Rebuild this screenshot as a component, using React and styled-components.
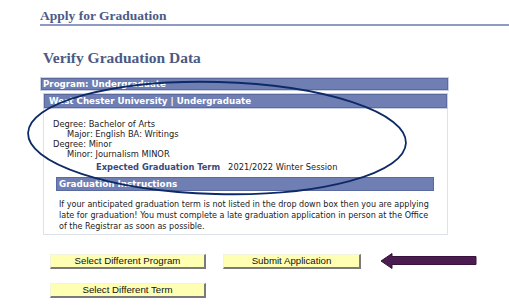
import styled, { createGlobalStyle } from "styled-components";

const GlobalStyle = createGlobalStyle`
  body {
    margin: 0;
    background: #ffffff;
    font-family: "DejaVu Sans", Verdana, sans-serif;
  }
`;

const App = () => {
  return (
    <>
      <GlobalStyle />
      <Page>
        {/* page title */}
        <Header>
          <PageTitle>Apply for Graduation</PageTitle>
        </Header>

        <Main>
          <Heading>Verify Graduation Data</Heading>
          <Bar>Program: Undergraduate</Bar>

          <ProgramBox>
            <Bar inset>West Chester University | Undergraduate</Bar>
            <Details>
              <Line>Degree: Bachelor of Arts</Line>
              <Line indent>Major: English BA: Writings</Line>
              <Line>Degree: Minor</Line>
              <Line indent>Minor: Journalism MINOR</Line>
              <TermRow>
                <TermLabel>Expected Graduation Term</TermLabel>
                <span>2021/2022 Winter Session</span>
              </TermRow>
            </Details>
            <SubBar>Graduation Instructions</SubBar>
            <Instructions>
              If your anticipated graduation term is not listed in the drop down box then you are applying<br />
              late for graduation! You must complete a late graduation application in person at the Office<br />
              of the Registrar as soon as possible.
            </Instructions>
          </ProgramBox>
        </Main>

        {/* buttons */}
        <ButtonRow>
          <Button width="156px">Select Different Program</Button>
          <Button width="138px" left>Submit Application</Button>
          <Arrow width="98" height="16" viewBox="0 0 98 16">
            <polygon points="1,8 12,0.5 12,3.5 96,3.5 96,11.5 12,11.5 12,15.5" fill="#4a1d4e" stroke="#3a1040" strokeWidth="1" />
          </Arrow>
        </ButtonRow>
        <ButtonRow second>
          <Button width="156px">Select Different Term</Button>
        </ButtonRow>

        {/* hand drawn ellipse */}
        <Circle width="509" height="307" viewBox="0 0 509 307">
          <ellipse cx="217" cy="138" rx="189" ry="56" transform="rotate(1.5 217 138)" fill="none" stroke="#0e2a66" strokeWidth="1.8" />
        </Circle>
      </Page>
    </>
  );
};

const Page = styled.div`
  position: relative;
  width: 509px;
  height: 307px;
  overflow: hidden;
`;

const Header = styled.div`
  margin-left: 40px;
  padding-top: 8px;
  border-bottom: 2px solid #8c9ac4;
`;

const PageTitle = styled.div`
  font-family: "Liberation Serif", "Times New Roman", serif;
  font-weight: bold;
  font-size: 13.5px;
  line-height: 15px;
  color: #4b5a88;
  padding-bottom: 1px;
`;

const Main = styled.div`
  margin-left: 41px;
  width: 407px;
  display: flex;
  flex-direction: column;
  padding-top: 23px;
`;

const Heading = styled.div`
  font-family: "Liberation Serif", "Times New Roman", serif;
  font-weight: bold;
  font-size: 15.5px;
  line-height: 17px;
  color: #4b5a84;
  margin-left: 2px;
  margin-bottom: 12px;
`;

const Bar = styled.div`
  box-sizing: border-box;
  height: ${(props) => (props.inset ? "14px" : "12px")};
  background: #6f7fb4;
  border: 1px solid #5a6a9f;
  outline: 1px solid #c9cfe4;
  color: #ffffff;
  font-weight: bold;
  font-size: 8.7px;
  line-height: ${(props) => (props.inset ? "12px" : "10px")};
  padding-left: ${(props) => (props.inset ? "4px" : "1px")};
  white-space: nowrap;
  overflow: hidden;
`;

const ProgramBox = styled.div`
  margin-top: 4px;
  margin-left: 2px;
  border: 1px solid #dde1ea;
  border-top: none;
  padding-bottom: 2px;
`;

const Details = styled.div`
  padding: 11px 0 0 9px;
  font-size: 8.3px;
  line-height: 10px;
  color: #222222;
`;

const Line = styled.div`
  padding-left: ${(props) => (props.indent ? "14px" : "0")};
`;

const TermRow = styled.div`
  margin-top: 3px;
  padding-left: 43px;
  display: flex;
  gap: 8px;
`;

const TermLabel = styled.span`
  font-weight: bold;
  color: #3c4a7c;
`;

const SubBar = styled.div`
  box-sizing: border-box;
  margin: 5px 0 0 12px;
  width: 378px;
  height: 14px;
  background: #6f7fb4;
  border: 1px solid #5a6a9f;
  color: #ffffff;
  font-weight: bold;
  font-size: 8.8px;
  line-height: 12px;
  padding-left: 2px;
`;

const Instructions = styled.div`
  margin: 8px 0 0 15px;
  font-size: 8.05px;
  line-height: 11px;
  color: #222222;
  white-space: nowrap;
`;

const ButtonRow = styled.div`
  display: flex;
  align-items: center;
  padding-left: 50px;
  margin-top: ${(props) => (props.second ? "14px" : "18px")};
`;

const Button = styled.div`
  box-sizing: border-box;
  width: ${(props) => props.width};
  height: 15px;
  margin-left: ${(props) => (props.left ? "17px" : "0")};
  background: #ffffb4;
  border-top: 1px solid #f4f4dc;
  border-left: 1px solid #f4f4dc;
  border-right: 2px solid #7a7a7a;
  border-bottom: 2px solid #7a7a7a;
  font-family: "Liberation Sans", Arial, sans-serif;
  font-size: 9.7px;
  line-height: 12px;
  text-align: center;
  color: #111111;
`;

const Arrow = styled.svg`
  margin-left: 19px;
  display: block;
`;

const Circle = styled.svg`
  position: absolute;
  left: 0;
  top: 0;
  pointer-events: none;
`;

export default App;
